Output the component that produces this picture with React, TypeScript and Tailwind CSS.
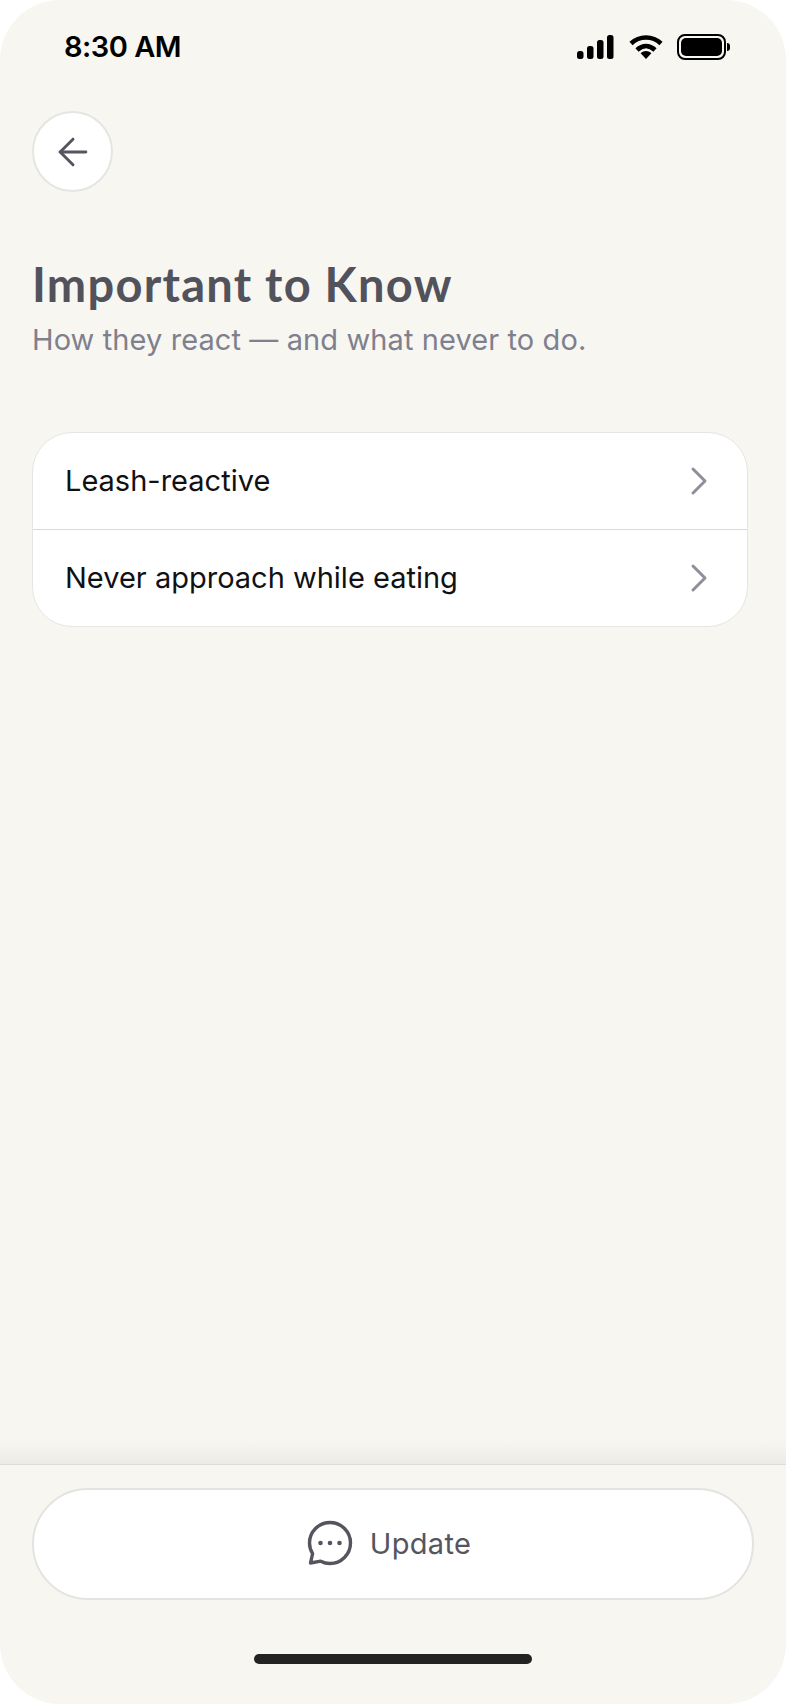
import { ArrowLeft, ChevronRight } from "lucide-react";

const rows = ["Leash-reactive", "Never approach while eating"];

const StatusIcons = () => (
  <div className="flex items-center">
    {/* signal */}
    <svg width="38" height="24" viewBox="0 0 38 24" className="mr-[14px]" fill="#000">
      <rect x="0" y="16" width="6.5" height="8" rx="2.5" />
      <rect x="10" y="11" width="6.5" height="13" rx="2.5" />
      <rect x="20" y="5" width="6.5" height="19" rx="2.5" />
      <rect x="30" y="0" width="6.5" height="24" rx="2.5" />
    </svg>
    {/* wifi */}
    <svg width="34" height="24" viewBox="0 0 34 24" className="mr-[14px]" fill="none">
      <path d="M2 8.5C10.5 0.5 23.5 0.5 32 8.5" stroke="#000" strokeWidth="4.6" />
      <path d="M8 15C13.5 9.8 20.5 9.8 26 15" stroke="#000" strokeWidth="4.6" />
      <path d="M11.6 18.2C15 15.2 19 15.2 22.4 18.2L17 24Z" fill="#000" />
    </svg>
    {/* battery */}
    <div className="flex items-center">
      <div className="flex h-[26px] w-[49px] items-center justify-center rounded-[8px] border-2 border-black p-[2px]">
        <div className="h-full w-full rounded-[5px] bg-black" />
      </div>
      <div className="ml-[1px] h-[8px] w-[3px] rounded-r-full bg-black" />
    </div>
  </div>
);

export default function App() {
  return (
    <div className="h-[1704px] w-[786px] bg-white font-['Inter',sans-serif]">
      <div className="flex h-full flex-col overflow-hidden rounded-[60px] bg-[#f7f6f1]">
        {/* status bar */}
        <div className="flex h-[94px] shrink-0 items-center justify-between pl-[64px] pr-[56px]">
          <span className="mb-[2px] text-[29px] font-semibold leading-none tracking-[-0.5px] text-black">8:30 AM</span>
          <StatusIcons />
        </div>

        <div className="flex-1 px-[32px] pt-[17px]">
          {/* back */}
          <button className="flex h-[81px] w-[81px] items-center justify-center rounded-full border-2 border-[#e6e5e1] bg-white">
            <ArrowLeft size={44} strokeWidth={1.6} color="#55555f" />
          </button>

          <h1 className="mt-[64px] font-['Lato',sans-serif] text-[47px] font-bold leading-[56px] tracking-[1.25px] text-[#52525c]">
            Important to Know
          </h1>
          <p className="mt-[8px] text-[29px] leading-[40px] tracking-[0.1px] text-[#7f808e]">How they react — and what never to do.</p>

          {/* list */}
          <div className="mt-[72px] w-[716px] overflow-hidden rounded-[40px] border border-[#e6e5e1] bg-white">
            {rows.map((label, i) => (
              <div
                key={label}
                className={
                  i === 0
                    ? "flex h-[97px] items-center justify-between border-b border-[#d9d9dc] pl-[32px] pr-[24px]"
                    : "flex h-[96px] items-center justify-between pl-[32px] pr-[24px]"
                }
              >
                <span className="mb-[2px] text-[29px] font-normal leading-none text-[#111113]">{label}</span>
                <ChevronRight size={48} strokeWidth={1.5} color="#8e8f99" />
              </div>
            ))}
          </div>
        </div>

        {/* footer */}
        <div className="relative h-[240px] shrink-0 border-t border-[#dddcd8] px-[32px] pt-[23px]">
          <div className="absolute inset-x-0 -top-[25px] h-[24px] bg-gradient-to-b from-transparent to-[#ecebe7]" />
          <button className="flex h-[112px] w-[722px] items-center justify-center gap-[17px] rounded-full border-2 border-[#e4e3df] bg-white pb-[2px] pr-[8px]">
            <svg width="46" height="46" viewBox="0 0 46 46" fill="none" stroke="#55555f" strokeWidth="3.4" strokeLinejoin="round">
              <path d="M23 2.5C34.3 2.5 43.5 11.7 43.5 23S34.3 43.5 23 43.5C19.6 43.5 16.5 42.7 13.7 41.2L3.5 43L5.6 33.6C3.6 30.5 2.5 26.9 2.5 23C2.5 11.7 11.7 2.5 23 2.5Z" />
              <circle cx="13.5" cy="23" r="2.3" fill="#55555f" stroke="none" />
              <circle cx="23" cy="23" r="2.3" fill="#55555f" stroke="none" />
              <circle cx="32.5" cy="23" r="2.3" fill="#55555f" stroke="none" />
            </svg>
            <span className="text-[29px] leading-none tracking-[0.3px] text-[#55555f]">Update</span>
          </button>
          <div className="mx-auto mt-[54px] h-[10px] w-[278px] rounded-full bg-[#232323]" />
        </div>
      </div>
    </div>
  );
}
